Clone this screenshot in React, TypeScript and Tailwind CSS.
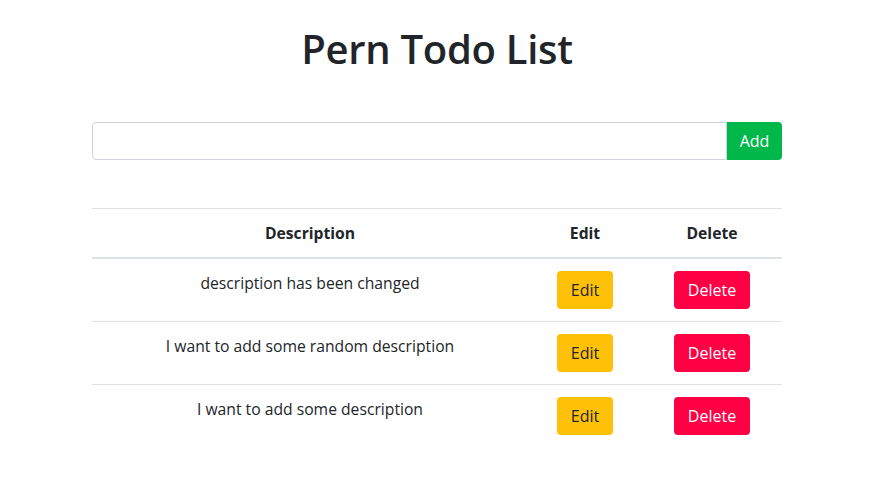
import React from 'react';

const todos = [
  { id: 1, description: 'description has been changed' },
  { id: 2, description: 'I want to add some random description' },
  { id: 3, description: 'I want to add some description' },
];

export default function App() {
  return (
    <div className="min-h-screen bg-white text-[#212529] font-['Open_Sans',sans-serif]">
      <div className="mx-auto w-[695px] pr-[5px]">
        {/* Title */}
        <h1 className="pt-[25px] text-center text-[40px] leading-[48px] font-semibold tracking-[-0.3px]">Pern Todo List</h1>

        {/* Add form */}
        <form className="mt-[49px] flex" onSubmit={e => e.preventDefault()}>
          <input
            type="text"
            className="h-[38px] flex-1 rounded-l-[4px] border border-[#ced4da] px-3 text-base outline-none"
          />
          <button className="h-[38px] w-[55px] rounded-r-[4px] bg-[#00b74a] text-base text-white">Add</button>
        </form>

        {/* Todo table */}
        <table className="mt-[48px] w-full border-collapse text-center text-[15.7px]">
          <thead>
            <tr className="border-t border-[#dee2e6]">
              <th className="w-[436px] border-b-2 border-[#dee2e6] p-3 leading-6 font-bold">Description</th>
              <th className="w-[114px] border-b-2 border-[#dee2e6] p-3 leading-6 font-bold">Edit</th>
              <th className="border-b-2 border-[#dee2e6] p-3 leading-6 font-bold">Delete</th>
            </tr>
          </thead>
          <tbody>
            {todos.map((todo, i) => (
              <tr key={todo.id} className={i > 0 ? 'border-t border-[#dee2e6]' : ''}>
                <td className="p-3 align-top leading-6">{todo.description}</td>
                <td className="p-3 align-top">
                  <button className="h-[38px] rounded-[4px] bg-[#ffc107] px-[13.5px] text-base leading-6 text-[#212529]">Edit</button>
                </td>
                <td className="p-3 align-top">
                  <button className="h-[38px] rounded-[4px] bg-[#ff0044] px-[13.5px] text-base leading-6 text-white">Delete</button>
                </td>
              </tr>
            ))}
          </tbody>
        </table>
      </div>
    </div>
  );
}
